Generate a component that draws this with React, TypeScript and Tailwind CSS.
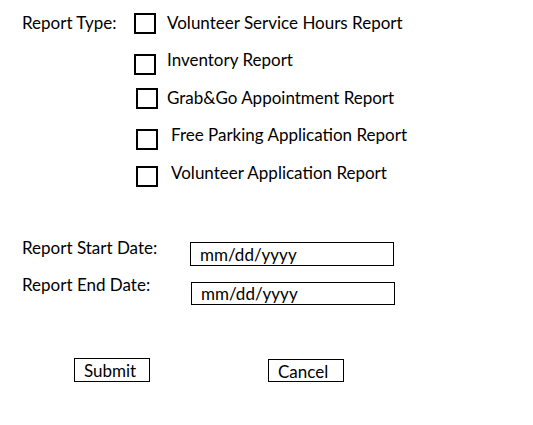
import React from "react";

// each row: gap above checkbox, checkbox x shift, gap box->text, text nudge
const reportTypes = [
  { label: "Volunteer Service Hours Report", rowTop: "mt-[13px]", boxX: "ml-0", textX: "ml-[11px]", textY: "mt-[1px]" },
  { label: "Inventory Report", rowTop: "mt-[20px]", boxX: "ml-0", textX: "ml-[11px]", textY: "-mt-[3px]" },
  { label: "Grab&Go Appointment Report", rowTop: "mt-[13px]", boxX: "ml-[2px]", textX: "ml-[9px]", textY: "mt-[1px]" },
  { label: "Free Parking Application Report", rowTop: "mt-[20px]", boxX: "ml-[2px]", textX: "ml-[13px]", textY: "-mt-[3px]" },
  { label: "Volunteer Application Report", rowTop: "mt-[16px]", boxX: "ml-[2px]", textX: "ml-[13px]", textY: "-mt-[2px]" },
];

const Checkbox = () => (
  <div className="h-[21px] w-[22px] shrink-0 border-2 border-black bg-white" />
);

const App = () => {
  return (
    <div
      className="h-[425px] w-[533px] bg-white text-[17px] leading-none text-black"
      style={{ fontFamily: "Lato, 'Liberation Sans', sans-serif" }}
    >
      <div className="flex pl-[22px]">
        <div className="w-[112px] pt-[14px]">Report Type:</div>
        <div className="flex flex-col">
          {reportTypes.map((r) => (
            <div key={r.label} className={`flex h-[21px] items-start ${r.rowTop} ${r.boxX}`}>
              <Checkbox />
              <span className={`whitespace-nowrap ${r.textX} ${r.textY}`}>{r.label}</span>
            </div>
          ))}
        </div>
      </div>

      <div className="mt-[55px] flex flex-col pl-[22px]">
        <div className="flex items-start">
          <span className="w-[168px] -mt-[3px]">Report Start Date:</span>
          <div className="h-[24px] w-[204px] border border-black pl-[9px] pt-[3px]">mm/dd/yyyy</div>
        </div>
        <div className="mt-[16px] flex items-start">
          <span className="w-[169px] -mt-[6px]">Report End Date:</span>
          <div className="h-[23px] w-[204px] border border-black pl-[9px] pt-[2px]">mm/dd/yyyy</div>
        </div>
      </div>

      <div className="mt-[53px] flex items-start pl-[74px]">
        <button className="h-[24px] w-[76px] border border-black pl-[9px] pt-[1px] text-left">
          Submit
        </button>
        <button className="ml-[118px] mt-[1px] h-[23px] w-[76px] border border-black pl-[9px] pt-[2px] text-left">
          Cancel
        </button>
      </div>
    </div>
  );
};

export default App;
